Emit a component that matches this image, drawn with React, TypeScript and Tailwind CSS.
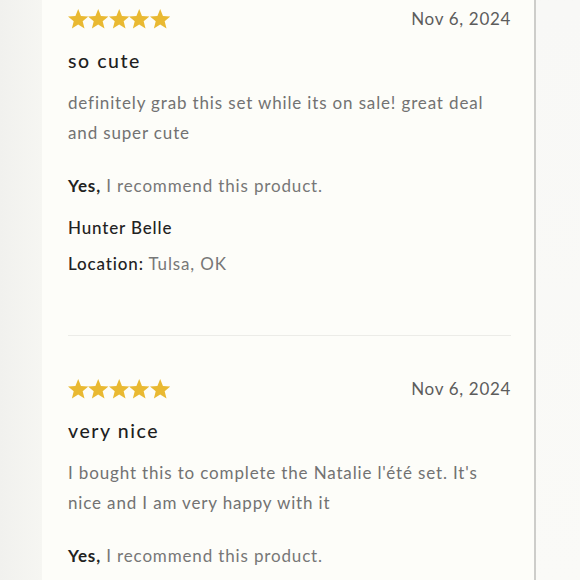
import React from 'react';

interface Review {
  id: number;
  title: string;
  body: string;
  date: string;
  name?: string;
  location?: string;
}

const reviews: Review[] = [
  {
    id: 1,
    title: 'so cute',
    body: 'definitely grab this set while its on sale! great deal and super cute',
    date: 'Nov 6, 2024',
    name: 'Hunter Belle',
    location: 'Tulsa, OK',
  },
  {
    id: 2,
    title: 'very nice',
    body: "I bought this to complete the Natalie l'été set. It's nice and I am very happy with it",
    date: 'Nov 6, 2024',
  },
];

function Star() {
  return (
    <svg width="20.4" height="19.5" viewBox="0.8 0.8 22.4 21.4" className="shrink-0">
      <path
        d="M12 0.8l3.05 7.6 8.15 0.55-6.27 5.23 2 7.93L12 17.77l-6.93 4.34 2-7.93L0.8 8.95l8.15-0.55z"
        fill="#e9b932"
      />
    </svg>
  );
}

function ReviewItem({ review, last }: { review: Review; last?: boolean }) {
  return (
    <div className={last ? '' : 'border-b border-[#ecece8] pb-[59px] mb-[43px]'}>
      <div className="flex items-center justify-between h-[20px]">
        <div className="flex">
          {[0, 1, 2, 3, 4].map((i) => (
            <Star key={i} />
          ))}
        </div>
        <p className="text-[17px] text-[#5c5c5c] tracking-[0.04em]">{review.date}</p>
      </div>
      <h3 className="mt-[20px] text-[19.5px] leading-[24px] font-medium text-[#1f1f1f] tracking-[0.08em]">
        {review.title}
      </h3>
      <p className="mt-[15px] text-[17px] leading-[30px] text-[#727272] tracking-[0.05em] pr-[10px]">
        {review.body}
      </p>
      <p className="mt-[26px] text-[17px] leading-[24px] text-[#777] tracking-[0.05em]">
        <span className="font-bold text-[#222]">Yes,</span> I recommend this product.
      </p>
      {review.name && (
        <p className="mt-[18px] text-[17px] leading-[24px] font-medium text-[#222] tracking-[0.05em]">
          {review.name}
        </p>
      )}
      {review.location && (
        <p className="mt-[12px] text-[17px] leading-[24px] text-[#777] tracking-[0.05em]">
          <span className="font-medium text-[#222]">Location:</span> {review.location}
        </p>
      )}
    </div>
  );
}

export default function App() {
  return (
    <div
      className="w-[580px] h-[580px] overflow-hidden flex bg-[#f6f6f3]"
      style={{ fontFamily: 'Lato, "Open Sans", sans-serif' }}
    >
      <div className="w-[42px] shrink-0 bg-gradient-to-r from-[#f1f1ee] to-[#f6f6f2]" />
      <div className="w-[494px] shrink-0 bg-[#fdfdf9] border-r-2 border-[#cdcdca] pl-[26px] pr-[23px] pt-[9px]">
        {reviews.map((r, i) => (
          <ReviewItem key={r.id} review={r} last={i === reviews.length - 1} />
        ))}
      </div>
      <div className="flex-1 bg-gradient-to-b from-[#f8f8f6] to-[#fafaf7]" />
    </div>
  );
}
